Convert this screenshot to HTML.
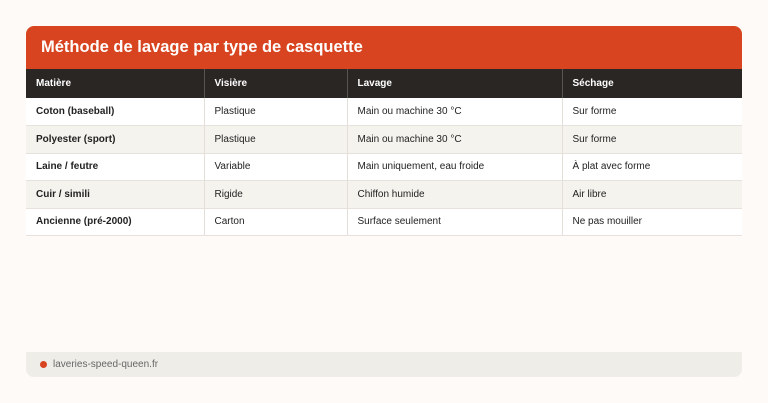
<!DOCTYPE html>
<html><head><meta charset="utf-8"><style>
*{margin:0;padding:0;box-sizing:border-box}
body{width:768px;height:403px;background:#fdfaf7;font-family:"Liberation Sans",sans-serif;position:relative;overflow:hidden}
.title{position:absolute;left:26px;top:26px;width:716px;height:43px;background:#d84420;border-radius:8px 8px 0 0;color:#fff;font-weight:bold;font-size:16.5px;padding:12px 0 0 15px}
table{position:absolute;left:26px;top:69px;width:716px;border-collapse:collapse;font-size:10px;color:#222}
th{background:#2a2624;color:#fff;font-weight:bold;text-align:left;height:29px;padding-left:10px;border-left:1px solid #555}
td{height:27.5px;padding-left:10px;border-left:1px solid #e3ded8;border-bottom:1px solid #e6e1db;background:#fff}
th:first-child,td:first-child{border-left:none}
tr:nth-child(odd) td{background:#f5f3ee}
td:first-child{font-weight:bold}
.foot{position:absolute;left:26px;top:352px;width:716px;height:25px;background:#efede8;border-radius:0 0 8px 8px;font-size:10px;color:#666;padding:7px 0 0 27px}
.dot{position:absolute;left:14px;top:9px;width:7px;height:7px;border-radius:50%;background:#d84420}
</style></head><body>
<div class="title">Méthode de lavage par type de casquette</div>
<table>
<tr><th style="width:178px">Matière</th><th style="width:143px">Visière</th><th style="width:215px">Lavage</th><th>Séchage</th></tr>
<tr><td>Coton (baseball)</td><td>Plastique</td><td>Main ou machine 30 °C</td><td>Sur forme</td></tr>
<tr><td>Polyester (sport)</td><td>Plastique</td><td>Main ou machine 30 °C</td><td>Sur forme</td></tr>
<tr><td>Laine / feutre</td><td>Variable</td><td>Main uniquement, eau froide</td><td>À plat avec forme</td></tr>
<tr><td>Cuir / simili</td><td>Rigide</td><td>Chiffon humide</td><td>Air libre</td></tr>
<tr><td>Ancienne (pré-2000)</td><td>Carton</td><td>Surface seulement</td><td>Ne pas mouiller</td></tr>
</table>
<div class="foot"><span class="dot"></span>laveries-speed-queen.fr</div>
</body></html>
